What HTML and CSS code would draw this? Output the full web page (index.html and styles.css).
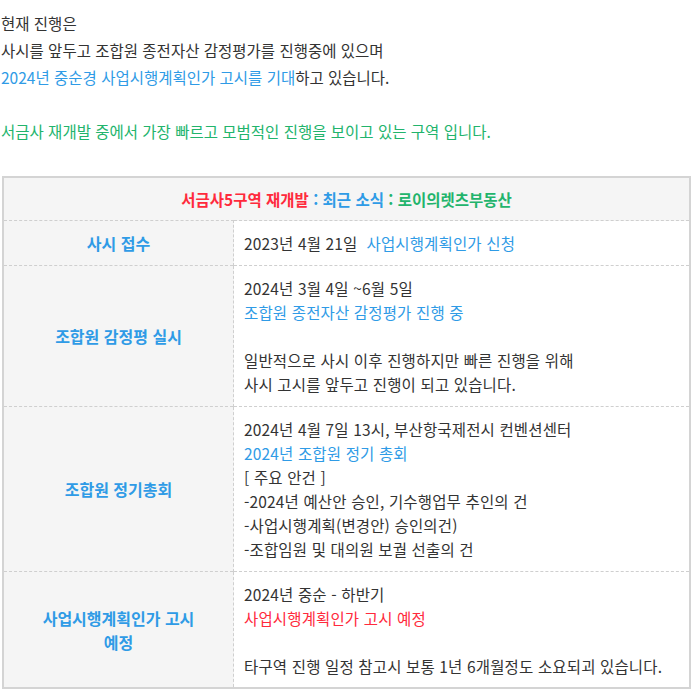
FILE: index.html
```html
<!DOCTYPE html>
<html lang="ko">
<head>
<meta charset="utf-8">
<link rel="stylesheet" href="styles.css">
</head>
<body>
<div class="intro">
  <p>현재 진행은<br>사시를 앞두고 조합원 종전자산 감정평가를 진행중에 있으며<br><span class="blue">2024년 중순경 사업시행계획인가 고시를 기대</span>하고 있습니다.</p>
  <p class="green">서금사 재개발 중에서 가장 빠르고 모범적인 진행을 보이고 있는 구역 입니다.</p>
</div>
<table class="news">
  <tr>
    <th colspan="2" class="head"><span class="red">서금사5구역 재개발</span><span class="blue"> : 최근 소식</span><span class="green"> : 로이의렛츠부동산</span></th>
  </tr>
  <tr>
    <th class="label">사시 접수</th>
    <td>2023년 4월 21일&nbsp; <span class="blue">사업시행계획인가 신청</span></td>
  </tr>
  <tr>
    <th class="label">조합원 감정평 실시</th>
    <td>2024년 3월 4일 ~6월 5일<br><span class="blue">조합원 종전자산 감정평가 진행 중</span><br><br>일반적으로 사시 이후 진행하지만 빠른 진행을 위해<br>사시 고시를 앞두고 진행이 되고 있습니다.</td>
  </tr>
  <tr>
    <th class="label">조합원 정기총회</th>
    <td>2024년 4월 7일 13시, 부산항국제전시 컨벤션센터<br><span class="blue">2024년 조합원 정기 총회</span><br>[ 주요 안건 ]<br>-2024년 예산안 승인, 기수행업무 추인의 건<br>-사업시행계획(변경안) 승인의건)<br>-조합임원 및 대의원 보궐 선출의 건</td>
  </tr>
  <tr>
    <th class="label">사업시행계획인가 고시<br>예정</th>
    <td>2024년 중순 - 하반기<br><span class="red">사업시행계획인가 고시 예정</span><br><br>타구역 진행 일정 참고시 보통 1년 6개월정도 소요되괴 있습니다.</td>
  </tr>
</table>
</body>
</html>
```

FILE: styles.css
```css
html, body {
  margin: 0;
  padding: 0;
  background: #fff;
}
body {
  font-family: "Noto Sans CJK KR", "Noto Sans", sans-serif;
  color: #333;
  font-size: 15.5px;
}
.intro {
  padding: 10px 1px 0;
}
.intro p {
  margin: 0 0 27px;
  line-height: 27px;
}
.intro p:last-child {
  margin-bottom: 0;
}
.blue { color: #2f9be6; }
.green { color: #22b46c; }
.red { color: #ff2a3c; }
.news {
  margin: 31px 0 0 2px;
  width: 689px;
  border-collapse: collapse;
  border: 2px solid #d4d4d4;
  font-size: 15.5px;
}
.news th, .news td {
  line-height: 24px;
  padding: 10px 0;
  border-top: 1px dashed #cfcfcf;
  vertical-align: middle;
}
.news th.head {
  background: #f5f5f5;
  font-weight: bold;
  text-align: center;
  border-top: none;
  font-size: 15.5px;
  padding: 9px 0;
}
.news th.label {
  width: 229px;
  background: #f5f5f5;
  color: #2f9be6;
  font-weight: bold;
  font-size: 16px;
  text-align: center;
  border-right: 1px dashed #cfcfcf;
}
.news td {
  padding-left: 10px;
  color: #333;
  letter-spacing: 0.15px;
}
.news tr:last-child td,
.news tr:last-child th {
  padding-bottom: 9px;
}
```
